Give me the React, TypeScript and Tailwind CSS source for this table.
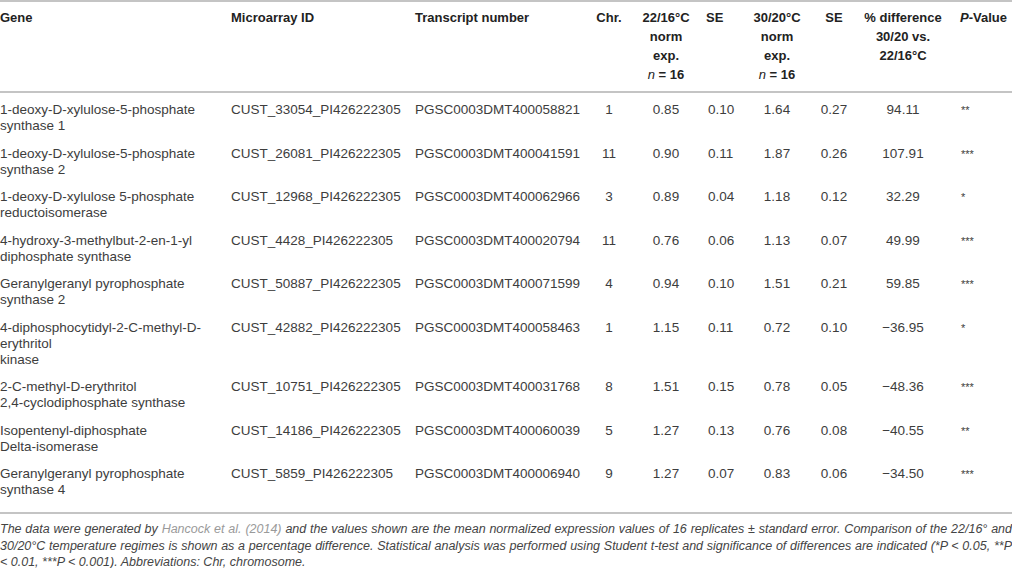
import React from "react";

type Row = {
  gene: string[];
  id: string;
  tr: string;
  chr: string;
  a: string;
  se1: string;
  b: string;
  se2: string;
  diff: string;
  p: string;
};

const rows: Row[] = [
  { gene: ["1-deoxy-D-xylulose-5-phosphate", "synthase 1"], id: "CUST_33054_PI426222305", tr: "PGSC0003DMT400058821", chr: "1", a: "0.85", se1: "0.10", b: "1.64", se2: "0.27", diff: "94.11", p: "**" },
  { gene: ["1-deoxy-D-xylulose-5-phosphate", "synthase 2"], id: "CUST_26081_PI426222305", tr: "PGSC0003DMT400041591", chr: "11", a: "0.90", se1: "0.11", b: "1.87", se2: "0.26", diff: "107.91", p: "***" },
  { gene: ["1-deoxy-D-xylulose 5-phosphate", "reductoisomerase"], id: "CUST_12968_PI426222305", tr: "PGSC0003DMT400062966", chr: "3", a: "0.89", se1: "0.04", b: "1.18", se2: "0.12", diff: "32.29", p: "*" },
  { gene: ["4-hydroxy-3-methylbut-2-en-1-yl", "diphosphate synthase"], id: "CUST_4428_PI426222305", tr: "PGSC0003DMT400020794", chr: "11", a: "0.76", se1: "0.06", b: "1.13", se2: "0.07", diff: "49.99", p: "***" },
  { gene: ["Geranylgeranyl pyrophosphate", "synthase 2"], id: "CUST_50887_PI426222305", tr: "PGSC0003DMT400071599", chr: "4", a: "0.94", se1: "0.10", b: "1.51", se2: "0.21", diff: "59.85", p: "***" },
  { gene: ["4-diphosphocytidyl-2-C-methyl-D-", "erythritol", "kinase"], id: "CUST_42882_PI426222305", tr: "PGSC0003DMT400058463", chr: "1", a: "1.15", se1: "0.11", b: "0.72", se2: "0.10", diff: "\u221236.95", p: "*" },
  { gene: ["2-C-methyl-D-erythritol", "2,4-cyclodiphosphate synthase"], id: "CUST_10751_PI426222305", tr: "PGSC0003DMT400031768", chr: "8", a: "1.51", se1: "0.15", b: "0.78", se2: "0.05", diff: "\u221248.36", p: "***" },
  { gene: ["Isopentenyl-diphosphate", "Delta-isomerase"], id: "CUST_14186_PI426222305", tr: "PGSC0003DMT400060039", chr: "5", a: "1.27", se1: "0.13", b: "0.76", se2: "0.08", diff: "\u221240.55", p: "**" },
  { gene: ["Geranylgeranyl pyrophosphate", "synthase 4"], id: "CUST_5859_PI426222305", tr: "PGSC0003DMT400006940", chr: "9", a: "1.27", se1: "0.07", b: "0.83", se2: "0.06", diff: "\u221234.50", p: "***" },
];

export default function App() {
  return (
    <div
      className="w-[1012px] h-[568px] overflow-hidden bg-white text-[#3d3d3d]"
      style={{ fontFamily: '"Liberation Sans", Arial, Helvetica, sans-serif' }}
    >
      <table className="w-[1012px] table-fixed border-collapse">
        <colgroup>
          <col className="w-[231px]" />
          <col className="w-[184px]" />
          <col className="w-[175px]" />
          <col className="w-[38px]" />
          <col className="w-[76px]" />
          <col className="w-[42px]" />
          <col className="w-[62px]" />
          <col className="w-[52px]" />
          <col className="w-[86px]" />
          <col className="w-[66px]" />
        </colgroup>
        <thead>
          <tr className="border-t-2 border-b-2 border-[#c4c4c4] align-top font-bold text-[13px] text-[#222] leading-[19px]">
            <th className="text-left font-bold pt-[6px] pb-[7px]">Gene</th>
            <th className="text-left font-bold pt-[6px] pb-[7px]">Microarray ID</th>
            <th className="text-left font-bold pt-[6px] pb-[7px]">Transcript number</th>
            <th className="text-center font-bold pt-[6px] pb-[7px]">Chr.</th>
            <th className="text-center font-bold pt-[6px] pb-[7px]">
              22/16°C
              <br />
              norm
              <br />
              exp.
              <br />
              <span className="italic font-normal">n</span> = 16
            </th>
            <th className="text-left font-bold pt-[6px] pb-[7px] pl-[2px]">SE</th>
            <th className="text-center font-bold pt-[6px] pb-[7px]">
              30/20°C
              <br />
              norm
              <br />
              exp.
              <br />
              <span className="italic font-normal">n</span> = 16
            </th>
            <th className="text-center font-bold pt-[6px] pb-[7px]">SE</th>
            <th className="text-center font-bold pt-[6px] pb-[7px] whitespace-nowrap">
              % difference
              <br />
              30/20 vs.
              <br />
              22/16°C
            </th>
            <th className="text-left font-bold pt-[6px] pb-[7px] pl-[14px] whitespace-nowrap">
              <span className="italic">P</span>-Value
            </th>
          </tr>
        </thead>
        <tbody className="leading-[16px] text-[13.5px]">
          {rows.map((r, i) => {
            const last = i === rows.length - 1;
            return (
              <tr key={i} className={"align-top " + (last ? "border-b-2 border-[#c4c4c4]" : "")}>
                <td className={"pt-[9px] " + (last ? "pb-[14px]" : "pb-[2.5px]")}>
                  {r.gene.map((g, j) => (
                    <div key={j} className="whitespace-nowrap">{g}</div>
                  ))}
                </td>
                <td className="pt-[9px] whitespace-nowrap">{r.id}</td>
                <td className="pt-[9px] whitespace-nowrap">{r.tr}</td>
                <td className="pt-[9px] text-center">{r.chr}</td>
                <td className="pt-[9px] text-center">{r.a}</td>
                <td className="pt-[9px] text-left pl-[4px]">{r.se1}</td>
                <td className="pt-[9px] text-center">{r.b}</td>
                <td className="pt-[9px] text-center">{r.se2}</td>
                <td className="pt-[9px] text-center">{r.diff}</td>
                <td className="pt-[9px] text-left pl-[15px] text-[11px]">{r.p}</td>
              </tr>
            );
          })}
        </tbody>
      </table>
      <div className="pt-[7px] italic text-[12.5px] leading-[16.5px] text-[#444]">
        <div className="text-justify [text-align-last:justify] whitespace-nowrap">
          The data were generated by <span className="text-[#9a9a9a]">Hancock et al. (2014)</span> and the values shown are the mean normalized expression values of 16 replicates ± standard error. Comparison of the 22/16° and
        </div>
        <div className="text-justify [text-align-last:justify] whitespace-nowrap">
          30/20°C temperature regimes is shown as a percentage difference. Statistical analysis was performed using Student t-test and significance of differences are indicated (*P &lt; 0.05, **P
        </div>
        <div className="whitespace-nowrap">&lt; 0.01, ***P &lt; 0.001). Abbreviations: Chr, chromosome.</div>
      </div>
    </div>
  );
}
